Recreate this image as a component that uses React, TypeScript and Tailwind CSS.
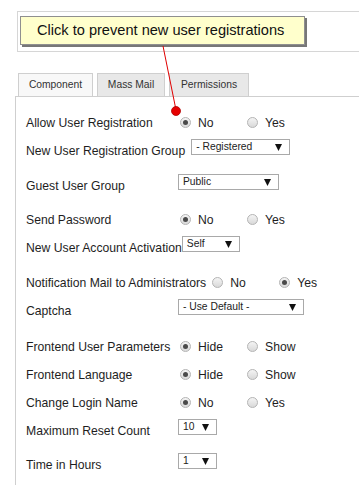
import React from "react";

type Row =
  | { label: string; kind: "radio"; options: string[]; checked: number; mt?: string; ml?: string }
  | { label: string; kind: "select"; value: string; width: string; ml?: string; mt?: string };

const rows: Row[] = [
  { label: "Allow User Registration", kind: "radio", options: ["No", "Yes"], checked: 0 },
  { label: "New User Registration Group", kind: "select", value: "- Registered", width: "w-[99px]", ml: "ml-[6px]" },
  { label: "Guest User Group", kind: "select", value: "Public", width: "w-[101px]", mt: "mt-[7px]" },
  { label: "Send Password", kind: "radio", options: ["No", "Yes"], checked: 0, mt: "mt-[6px]" },
  { label: "New User Account Activation", kind: "select", value: "Self", width: "w-[58px]", ml: "ml-0" },
  { label: "Notification Mail to Administrators", kind: "radio", options: ["No", "Yes"], checked: 1, mt: "mt-[7px]", ml: "ml-[6px]" },
  { label: "Captcha", kind: "select", value: "- Use Default -", width: "w-[126px]" },
  { label: "Frontend User Parameters", kind: "radio", options: ["Hide", "Show"], checked: 0, mt: "mt-[8px]" },
  { label: "Frontend Language", kind: "radio", options: ["Hide", "Show"], checked: 0 },
  { label: "Change Login Name", kind: "radio", options: ["No", "Yes"], checked: 0 },
  { label: "Maximum Reset Count", kind: "select", value: "10", width: "w-[39px]" },
  { label: "Time in Hours", kind: "select", value: "1", width: "w-[39px]", mt: "mt-[6px]" },
];

function Radio({ on }: { on: boolean }) {
  return (
    <span className="flex h-[11px] w-[11px] items-center justify-center rounded-full border border-[#b4b4b4] bg-gradient-to-b from-[#f4f4f4] to-[#d9d9d9]">
      {on && <span className="h-[5px] w-[5px] rounded-full bg-[#4a4a4a]" />}
    </span>
  );
}

function Select({ value, width, ml }: { value: string; width: string; ml?: string }) {
  return (
    <div
      className={`mb-[8px] flex h-[16px] items-center justify-between border border-[#a9a9a9] bg-white pl-[4px] pr-[7px] text-[10.3px] text-[#222] ${width} ${ml ?? ""}`}
    >
      <span>{value}</span>
      <svg width="7" height="7" viewBox="0 0 7 7">
        <polygon points="0,0 7,0 3.5,7" fill="#111" />
      </svg>
    </div>
  );
}

export default function App() {
  return (
    <div className="relative h-[485px] w-[359px] overflow-hidden bg-white font-['Liberation_Sans',Arial,sans-serif] text-[#1e1e1e]">
      <div className="pl-[17px] pt-[11px]">
        <div className="h-[41px] border border-r-0 border-[#d6d6d6] pl-[2px] pt-[4px]">
          <div className="flex h-[29px] w-[285px] items-center border border-[#8f8f8f] bg-[#ffffcc] pl-[16px] text-[14.6px] text-[#111] shadow-[2px_2px_0_#777]">
            Click to prevent new user registrations
          </div>
        </div>
      </div>

      <div className="ml-[15px] mt-[21px] flex gap-[4px] pl-[3px] text-[10.3px] text-[#333]">
        <div className="flex h-[23px] w-[75px] items-center justify-center border border-b-0 border-[#cfcfcf] bg-[#f8f8f8]">
          Component
        </div>
        <div className="flex h-[23px] w-[68px] items-center justify-center border border-b-0 border-[#cfcfcf] bg-[#e8e8e8]">
          Mass Mail
        </div>
        <div className="flex h-[23px] w-[80px] items-center justify-center border border-b-0 border-[#cfcfcf] bg-[#e8e8e8]">
          Permissions
        </div>
      </div>

      <div className="ml-[15px] h-[400px] border-l border-t border-[#cfcfcf] pl-[10px] pt-[12px] text-[12.2px]">
        {rows.map((r) => (
          <div key={r.label} className={`flex h-[28px] items-center ${r.mt ?? ""}`}>
            <span className="min-w-[152px] whitespace-nowrap">{r.label}</span>
            {r.kind === "radio" ? (
              <div className={`flex ${r.ml ?? "ml-[2px]"}`}>
                {r.options.map((o, i) => (
                  <div key={o} className="flex w-[67px] items-center gap-[7px]">
                    <Radio on={i === r.checked} />
                    <span>{o}</span>
                  </div>
                ))}
              </div>
            ) : (
              <Select value={r.value} width={r.width} ml={r.ml} />
            )}
          </div>
        ))}
      </div>

      <svg className="pointer-events-none absolute left-0 top-0" width="359" height="485">
        <line x1="163" y1="46" x2="176" y2="110" stroke="#e00000" strokeWidth="1" />
        <circle cx="176" cy="111" r="4.5" fill="#e60000" stroke="#b00000" strokeWidth="0.8" />
      </svg>
    </div>
  );
}
